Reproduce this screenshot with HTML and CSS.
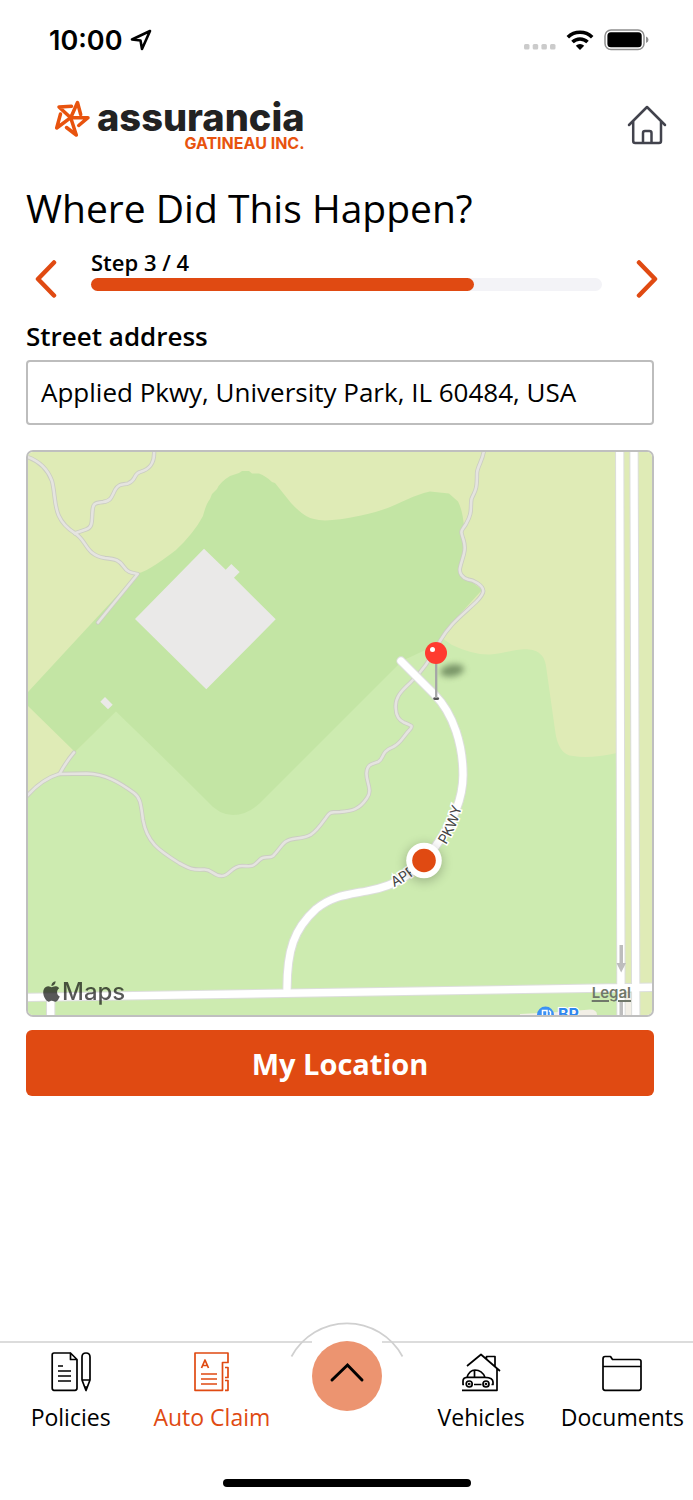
FILE: index.html
```html
<!DOCTYPE html>
<html lang="en">
<head>
    <meta charset="UTF-8">
    <meta name="viewport" content="width=device-width, initial-scale=1.0">
    <title>Assurancia - Auto Claim</title>
    <link rel="stylesheet" href="styles.css">
</head>
<body>
    <div class="status-bar">
        <div class="status-time">
            <span>10:00</span>
            <svg width="22" height="22" viewBox="0 0 22 22" fill="none" stroke="#000" stroke-width="2.6" stroke-linejoin="round">
                <path d="M20 2 L2 10.500 L10.500 11.500 L12 20 Z"/>
            </svg>
        </div>
        <div class="status-icons">
            <svg width="32" height="6" viewBox="0 0 32 6" fill="#cbcbcb">
                <rect x="0" y="0" width="5.500" height="5.500" rx="1.500"/>
                <rect x="8.700" y="0" width="5.500" height="5.500" rx="1.500"/>
                <rect x="17.400" y="0" width="5.500" height="5.500" rx="1.500"/>
                <rect x="26" y="0" width="5.500" height="5.500" rx="1.500"/>
            </svg>
            <svg width="28" height="20" viewBox="0 0 28 20" fill="none" stroke="#000" stroke-width="3.600">
                <path d="M1.800 7.200 A17.500 17.500 0 0 1 26.200 7.200"/>
                <path d="M6.500 12 A10.800 10.800 0 0 1 21.500 12"/>
                <path d="M14 20 L9.800 15.800 A6 6 0 0 1 18.200 15.800 Z" fill="#000" stroke="none"/>
            </svg>
            <svg width="45" height="22" viewBox="0 0 45 22">
                <rect x="1" y="1" width="39" height="19.500" rx="6" fill="none" stroke="#8f8f8f" stroke-width="1.500"/>
                <rect x="3.400" y="3.300" width="34.300" height="15" rx="3.500"/>
                <path d="M42 7.500 Q44.500 8.500 44.500 10.700 Q44.500 13 42 14 Z" fill="#8f8f8f"/>
            </svg>
        </div>
    </div>

    <header class="header">
        <a class="logo" href="#">
            <svg class="logo-mark" width="36" height="38" viewBox="54 100 36 38" fill="none" stroke="#e8530e" stroke-width="3.500" stroke-linejoin="round" stroke-linecap="round">
                <path d="M70.700 117.700 L59 107 L71.500 106.300"/>
                <path d="M70.700 117.700 L77.500 102.500 L80.700 114.500"/>
                <path d="M70.700 117.700 L88 117.700 L78.700 125.500"/>
                <path d="M70.700 117.700 L76.300 135 L66.500 127.500"/>
                <path d="M70.700 117.700 L56.700 128 L60.500 114"/>
            </svg>
            <span class="logo-text">
                <span class="logo-name">assurancia</span>
                <span class="logo-sub">GATINEAU INC.</span>
            </span>
        </a>
        <a class="home-link" href="#" aria-label="Home">
            <svg width="40" height="40" viewBox="0 0 40 40" fill="none" stroke="#42434d" stroke-width="2.500" stroke-linejoin="round" stroke-linecap="round">
                <path d="M2 20 L20 2 L38 20"/>
                <path d="M6.200 17 V36 Q6.200 38 8.200 38 H32 Q34 38 34 36 V17"/>
                <path d="M16 37 V28 Q16 26 18 26 H22.500 Q24.500 26 24.500 28 V37"/>
            </svg>
        </a>
    </header>

    <main class="content">
        <h1>Where Did This Happen?</h1>

        <div class="steps">
            <button class="step-button" type="button" aria-label="Previous step">
                <svg width="24" height="38" viewBox="0 0 24 38"><path d="M20 2.500 L4 19 L20 35.500"/></svg>
            </button>
            <div class="step-progress">
                <span class="step-label">Step 3 / 4</span>
                <div class="track">
                    <div class="track-fill" style="width: 75%"></div>
                </div>
            </div>
            <button class="step-button" type="button" aria-label="Next step">
                <svg width="24" height="38" viewBox="0 0 24 38"><path d="M4 2.500 L20 19 L4 35.500"/></svg>
            </button>
        </div>

        <form class="claim-form">
            <label for="address">Street address</label>
            <input type="text" id="address" value="Applied Pkwy, University Park, IL 60484, USA">

            <div class="map">
                <svg class="map-canvas" viewBox="28 452 624 563">
                    <defs>
                        <filter id="blur" x="-50%" y="-50%" width="200%" height="200%">
                            <feGaussianBlur stdDeviation="3"/>
                        </filter>
                        <filter id="dotShadow" x="-50%" y="-50%" width="200%" height="200%">
                            <feGaussianBlur stdDeviation="6"/>
                        </filter>
                        <path id="labelLeft" d="M394 887 Q412 879 428 862"/>
                        <path id="labelRight" d="M446 845 Q457 828 463 802"/>
                        <path id="trailLeft" d="M26 456.500 C40 461 48 470 52 481 C57 500 51 518 75 533.300 C87 540 85 555 105 558 C116 559 119 560 124 567 C128 573 132 572.500 137.700 574 L98 622.500"/>
                        <path id="trailTop" d="M154 450 C155 462 151 469 140 472 C133 474 137 480 128 483.500 C123 485 119 483 115 490 C111 499 110 501 103 502 C94 503 93 504 92.500 511 C91.500 522 93 527 86 529.500 L75 533.300"/>
                        <path id="trailMain" d="M484 450 C483 460 477.500 466 477 473 C477 492 475 490 471.500 499 C470 508 473 512 466 524 C461 532 460 529 463.500 540 C467 551 462 558 460 568 C459 573 462 578 468 579.500 C473 580 483 585 483.300 591 C483 595 480 598 476 602 C460 617 450 624 440 641 C430 661 422 672 410 683 C400 692 395 698 395.700 708 C396 715 398 720 404 722.500 C413 726 413 726 409.500 730 C402 738 401 743 393 747 C380 752 385 758 378 762 C372 764 367 764 366.500 773 C366 782 373 790 367 798 C359 810 352 811 340 812 C329 812 330 812 325 819 C313 836 309 837 296 838.500 C282 840 283 846 273 856 C269 859 264 855 259.500 860 C252 868 251 866 242 866 C231 866 230 876 221.500 876 C213 876 212 869 204 869.500 C192 870 190 869 179 863 C158 850 147 842 143 820 C141 806 141 798 134 793 C119 782 105 774 87 773.500 L59 774 Q42 779 27 796"/>
                        <path id="trailSpur" d="M74 752.500 Q66 762 59.500 774"/>
                        <path id="pkwy" d="M401 661 L434 694 C454 714 463 746 463 775 C463 801 452 824 435 847 C413 875 396 886 367 891 C346 895 332 896 316 909 C294 929 287 950 287 989"/>
                        <path id="roads" d="M26 997.500 L654 987.200 M50.700 998 V1018 M619.700 448 L621 1018 M634 448 L635.800 1018"/>
                    </defs>

                    <!-- land -->
                    <rect x="28" y="452" width="624" height="563" fill="#dfebb6"/>
                    <path fill="#cdebb0" d="M28 794 Q42 779 59 774 L75 752 L116 711 L398 664 L442 638 L452 645 Q473 655 490 654.500 C503 654 517 648 529 649.500 Q544 651 546 666 L555 730 Q558 755 573 756 Q590 759 617 753 V1015 H28 Z"/>
                    <path fill="#c3e5a4" d="M138 573 Q146 573 176 550 Q194 533 203 516 Q206 504 210 499 L212 494 L217 489 Q220 482 230 476 L239 473 L242 471 H249 L252 473.500 H259 Q266 476 272 482 L275 483 L291 503 Q305 518 314 519 Q326 523 361 515.500 C395 509 408 496 430 491.500 L449 493.500 L458 501.500 Q463 511 464 528 L460 533 L465 548 L460 572 L482 590 L450 625 L438 644 L402 661 L260 803 Q247 815 233 815 Q219 815 207 801 Q160 754 116 711.500 L75 752 L28 706 V692 Z"/>
                    <rect x="625" y="993" width="7" height="22" fill="#f2efe6"/>

                    <!-- buildings -->
                    <path fill="#eae9e8" d="M204 548.700 L225.700 569.700 L231.300 564 L239.700 572 L234 577.700 L275.700 619.300 L206.300 689.300 L135 619 Z"/>
                    <path fill="#eae9e8" d="M105 697 L112.700 704.700 L108 709.300 L100.300 701.700 Z"/>
                    <path fill="#f2efe6" d="M520 1015 V1014 L560 1012 L590 1009.500 Q597 1009.500 597 1015 Z"/>

                    <!-- trails -->
                    <g fill="none" stroke="#cbcdc2" stroke-width="4.300" stroke-linecap="round" stroke-linejoin="round">
                        <use href="#trailLeft"/><use href="#trailTop"/><use href="#trailMain"/><use href="#trailSpur"/>
                    </g>
                    <g fill="none" stroke="#e5e4e0" stroke-width="2.600" stroke-linecap="round" stroke-linejoin="round">
                        <use href="#trailLeft"/><use href="#trailTop"/><use href="#trailMain"/><use href="#trailSpur"/>
                    </g>

                    <!-- roads -->
                    <g fill="none" stroke="#dcdedb" stroke-width="9.300" stroke-linecap="round">
                        <use href="#roads"/><use href="#pkwy"/>
                    </g>
                    <g fill="none" stroke="#fff" stroke-width="7.300" stroke-linecap="round">
                        <use href="#roads"/><use href="#pkwy"/>
                    </g>
                    <path fill="#bdbdbd" d="M619.500 945 H623 V963 H626 L621.200 972.500 L616.500 963 H619.500 Z M619.500 1001 H623 V1015 H619.500 Z"/>

                    <!-- road and place names -->
                    <text class="road-label"><textPath href="#labelLeft">APPLI</textPath></text>
                    <text class="road-label"><textPath href="#labelRight">PKWY</textPath></text>
                    <circle cx="545.500" cy="1015" r="8.500" fill="#3b91f5"/>
                    <path d="M542.500 1016 V1010.500 H547 V1016 M549 1010.500 L550.500 1012 V1016" fill="none" stroke="#fff" stroke-width="1.500"/>
                    <text class="place-label" x="558" y="1020">BP</text>

                    <!-- current location -->
                    <circle cx="424" cy="863" r="18" fill="#000" opacity=".25" filter="url(#dotShadow)"/>
                    <circle cx="424" cy="860.500" r="17.800" fill="#fff"/>
                    <circle cx="424" cy="860.500" r="11.800" fill="#e04a12"/>

                    <!-- pin -->
                    <ellipse cx="452" cy="670.500" rx="12" ry="6" fill="#4c6640" opacity=".65" transform="rotate(-10 452 670)" filter="url(#blur)"/>
                    <ellipse cx="436.200" cy="698.600" rx="3" ry="1.500" fill="#555"/>
                    <path d="M436.200 662 V698" stroke="#a5a5a7" stroke-width="2.300"/>
                    <circle cx="436" cy="653" r="11" fill="#ff3b30"/>
                    <circle cx="432.500" cy="649.500" r="2.500" fill="#fff"/>
                </svg>
                <div class="map-brand">
                    <svg width="17" height="21" viewBox="2 0 20 24">
                        <path d="M12.152 6.896c-.948 0-2.415-1.078-3.960-1.040-2.040.027-3.910 1.183-4.961 3.014-2.117 3.675-.546 9.103 1.519 12.090 1.013 1.454 2.208 3.090 3.792 3.039 1.520-.065 2.090-.987 3.935-.987 1.831 0 2.350.987 3.960.948 1.637-.026 2.676-1.480 3.676-2.948 1.156-1.688 1.636-3.325 1.662-3.415-.039-.013-3.182-1.221-3.220-4.857-.026-3.040 2.480-4.494 2.597-4.559-1.429-2.090-3.623-2.324-4.390-2.376-2-.156-3.675 1.090-4.610 1.090zM15.530 3.830c.843-1.012 1.400-2.427 1.245-3.830-1.207.052-2.662.805-3.532 1.818-.780.896-1.454 2.338-1.273 3.714 1.338.104 2.715-.688 3.559-1.701"/>
                    </svg>
                    <span>Maps</span>
                </div>
                <a class="map-legal" href="#">Legal</a>
            </div>

            <button class="location-button" type="button">My Location</button>
        </form>
    </main>

    <footer class="footer">
        <nav class="tab-bar">
            <a class="tab" href="#">
                <svg width="42" height="42" viewBox="0 0 42 42">
                    <path d="M20.500 2 H4 Q2.200 2 2.200 4 V37 Q2.200 39.300 4 39.300 H25 Q27 39.300 27 37 V8.500 L20.500 2 V8.500 H27"/>
                    <path d="M8 15 H13 M8 20 H21 M8 25 H21 M8 30 H21"/>
                    <path d="M32 29 V6 Q32 2 36 2 Q40 2 40 6 V29 L36 39.500 L32 29 H40 M34.500 36 H37.500"/>
                </svg>
                <span>Policies</span>
            </a>
            <a class="tab active" href="#">
                <svg width="42" height="42" viewBox="0 0 42 42">
                    <path d="M4 2 H37 V11.500 H31.500 V39.300 H4 Z"/>
                    <path d="M10.500 17 L14 9 L17.500 17 M11.500 14.500 H16.500"/>
                    <path d="M10 23 H26 M10 28 H26 M10 33 H26"/>
                    <path d="M34 16.500 H37 V26.500 H34 M34 29.500 H37 V39.300 H34"/>
                </svg>
                <span>Auto Claim</span>
            </a>
            <div class="tab-center">
                <svg class="tab-arc" width="114" height="36" viewBox="0 0 114 36">
                    <path d="M1.500 34.500 A63 63 0 0 1 112.500 34.500" fill="none" stroke="#d0d0d0" stroke-width="1.700"/>
                </svg>
                <button class="menu-button" type="button" aria-label="Open menu">
                    <svg width="36" height="22" viewBox="0 0 36 22"><path d="M3 18 L18.500 3 L33 18"/></svg>
                </button>
            </div>
            <a class="tab" href="#">
                <svg width="42" height="42" viewBox="0 0 42 42">
                    <path d="M7 15 L21 3.500 L40 20 M26.500 7.500 V5.500 H35 V15.500 M37 17.500 V39.300 H2"/>
                    <path d="M4 33.500 H3 V30 Q3 26.500 7 26.300 Q9.500 19 15 19 Q22 19 25 26.300 Q33 26.500 33 31 V33.500 H31.500 M14 33.500 H21.500 M7 26.300 H25 M14.500 19 V26"/>
                    <circle cx="9.200" cy="33" r="3"/>
                    <circle cx="26" cy="33" r="3"/>
                    <circle cx="9.200" cy="33" r=".5"/>
                    <circle cx="26" cy="33" r=".5"/>
                </svg>
                <span>Vehicles</span>
            </a>
            <a class="tab" href="#">
                <svg width="42" height="42" viewBox="0 0 42 42">
                    <path d="M2 15.500 H40 M2 8 Q2 5.500 4 5.500 H9.500 L11.500 8.500 H38 Q40 8.500 40 10.500 V37 Q40 39.300 38 39.300 H4 Q2 39.300 2 37 Z"/>
                </svg>
                <span>Documents</span>
            </a>
        </nav>
        <div class="home-indicator"></div>
    </footer>
</body>
</html>
```

FILE: styles.css
```css
/* General */
* {
    box-sizing: border-box;
}

body {
    display: flex;
    flex-direction: column;
    min-height: 100vh;
    margin: 0;
    background-color: #fff;
    color: #000;
    font-family: "Open Sans", sans-serif;
}

svg {
    display: block;
    flex-shrink: 0;
}

a {
    color: inherit;
    text-decoration: none;
}

button {
    padding: 0;
    border: none;
    background: none;
    font-family: inherit;
    cursor: pointer;
}

/* Status bar */
.status-bar {
    display: flex;
    justify-content: space-between;
    align-items: center;
    height: 80px;
    padding: 0 44px 0 49px;
}

.status-time {
    display: flex;
    align-items: center;
    gap: 8px;
    font-family: Inter, sans-serif;
    font-size: 27px;
    font-weight: 600;
}

.status-icons {
    display: flex;
    align-items: center;
    gap: 10px;
}

.status-icons svg:first-child {
    margin-top: 14px;
}

/* Header */
.header {
    display: flex;
    justify-content: space-between;
    align-items: center;
    height: 90px;
    padding: 0 26px 0 54px;
}

.logo {
    display: flex;
    align-items: flex-start;
    gap: 7px;
    padding-top: 2px;
}

.logo-text {
    display: flex;
    flex-direction: column;
    align-items: flex-end;
    font-family: Inter, sans-serif;
}

.logo-name {
    color: #222;
    font-size: 38px;
    font-weight: 800;
    line-height: 34px;
}

.logo-sub {
    color: #e8530e;
    font-size: 16px;
    font-weight: 700;
    line-height: 18px;
}

/* Content */
.content {
    padding: 0 26px;
}

h1 {
    margin: 0;
    font-size: 39px;
    font-weight: 400;
    line-height: 76px;
}

.steps {
    display: flex;
    align-items: center;
    gap: 33px;
    height: 66px;
    padding: 0 8px;
}

.step-button svg {
    fill: none;
    stroke: #e04a12;
    stroke-width: 4.5;
    stroke-linecap: round;
    stroke-linejoin: round;
}

.step-progress {
    flex: 1;
    align-self: flex-start;
    padding-top: 3px;
}

.step-label {
    display: block;
    margin-bottom: 3px;
    font-size: 22px;
    font-weight: 600;
    line-height: 26px;
}

.track {
    height: 13px;
    border-radius: 7px;
    background-color: #f3f3f7;
}

.track-fill {
    height: 100%;
    border-radius: 7px;
    background-color: #e04a12;
}

/* Form */
.claim-form {
    display: flex;
    flex-direction: column;
    padding-right: 13px;
}

label {
    font-size: 26px;
    font-weight: 600;
    line-height: 48px;
}

input[type="text"] {
    height: 65px;
    padding: 0 13px 2px;
    border: 2px solid #bdbdbd;
    border-radius: 4px;
    background-color: #fff;
    color: #000;
    font-family: inherit;
    font-size: 26px;
}

/* Map */
.map {
    position: relative;
    margin: 25px 0 13px;
    border: 2px solid #bfbfbf;
    border-radius: 7px;
    overflow: hidden;
}

.map-canvas {
    width: 100%;
    height: auto;
}

.road-label {
    fill: #444;
    stroke: #fff;
    stroke-width: 3px;
    paint-order: stroke;
    font-family: Inter, sans-serif;
    font-size: 14px;
    font-weight: 400;
}

.place-label {
    fill: #2f86ee;
    stroke: #fff;
    stroke-width: 2px;
    paint-order: stroke;
    font-family: Inter, sans-serif;
    font-size: 16px;
    font-weight: 700;
}

.map-brand {
    display: flex;
    position: absolute;
    bottom: 8px;
    left: 15px;
    align-items: center;
    gap: 2px;
    opacity: 0.65;
    font-family: Inter, sans-serif;
    font-size: 24px;
    font-weight: 500;
    line-height: 30px;
}

.map-brand svg {
    margin-bottom: 2px;
}

.map-legal {
    position: absolute;
    right: 21px;
    bottom: 12px;
    color: #70786a;
    font-family: Inter, sans-serif;
    font-size: 15px;
    font-weight: 600;
    line-height: 20px;
    text-decoration: underline;
    text-decoration-thickness: 2px;
    text-underline-offset: 2px;
}

.location-button {
    height: 66px;
    border-radius: 6px;
    background-color: #e04a12;
    color: #fff;
    font-size: 29px;
    font-weight: 700;
}

/* Footer */
.footer {
    margin-top: auto;
    padding-bottom: 13px;
}

.tab-bar {
    display: grid;
    grid-template-columns: 1fr 1fr 128px 1fr 1fr;
    height: 138px;
    border-top: 2px solid #dcdcdc;
}

.tab {
    display: flex;
    flex-direction: column;
    align-items: center;
    gap: 8px;
    padding-top: 8px;
    font-size: 23px;
    line-height: 32px;
}

.tab svg {
    fill: none;
    stroke: currentColor;
    stroke-width: 1.7;
    stroke-linejoin: round;
}

.tab.active {
    color: #e04a12;
}

.tab-center {
    display: flex;
    position: relative;
    justify-content: center;
    align-items: flex-start;
}

.tab-arc {
    position: absolute;
    top: -21px;
    left: 7px;
}

/* Round menu button sits over the tab bar border */
.menu-button {
    display: flex;
    position: relative;
    justify-content: center;
    align-items: center;
    width: 70px;
    height: 70px;
    margin-top: -2px;
    border-radius: 50%;
    background-color: #ec9470;
}

.menu-button svg {
    margin-bottom: 6px;
    fill: none;
    stroke: #000;
    stroke-width: 3;
    stroke-linecap: round;
}

/* Hides the border on both sides of the button top */
.tab-center::before {
    content: "";
    position: absolute;
    top: -2px;
    left: 29px;
    width: 70px;
    height: 2px;
    background-color: #fff;
}

.home-indicator {
    width: 248px;
    height: 8px;
    margin: 0 auto;
    border-radius: 4px;
    background-color: #000;
}
```
